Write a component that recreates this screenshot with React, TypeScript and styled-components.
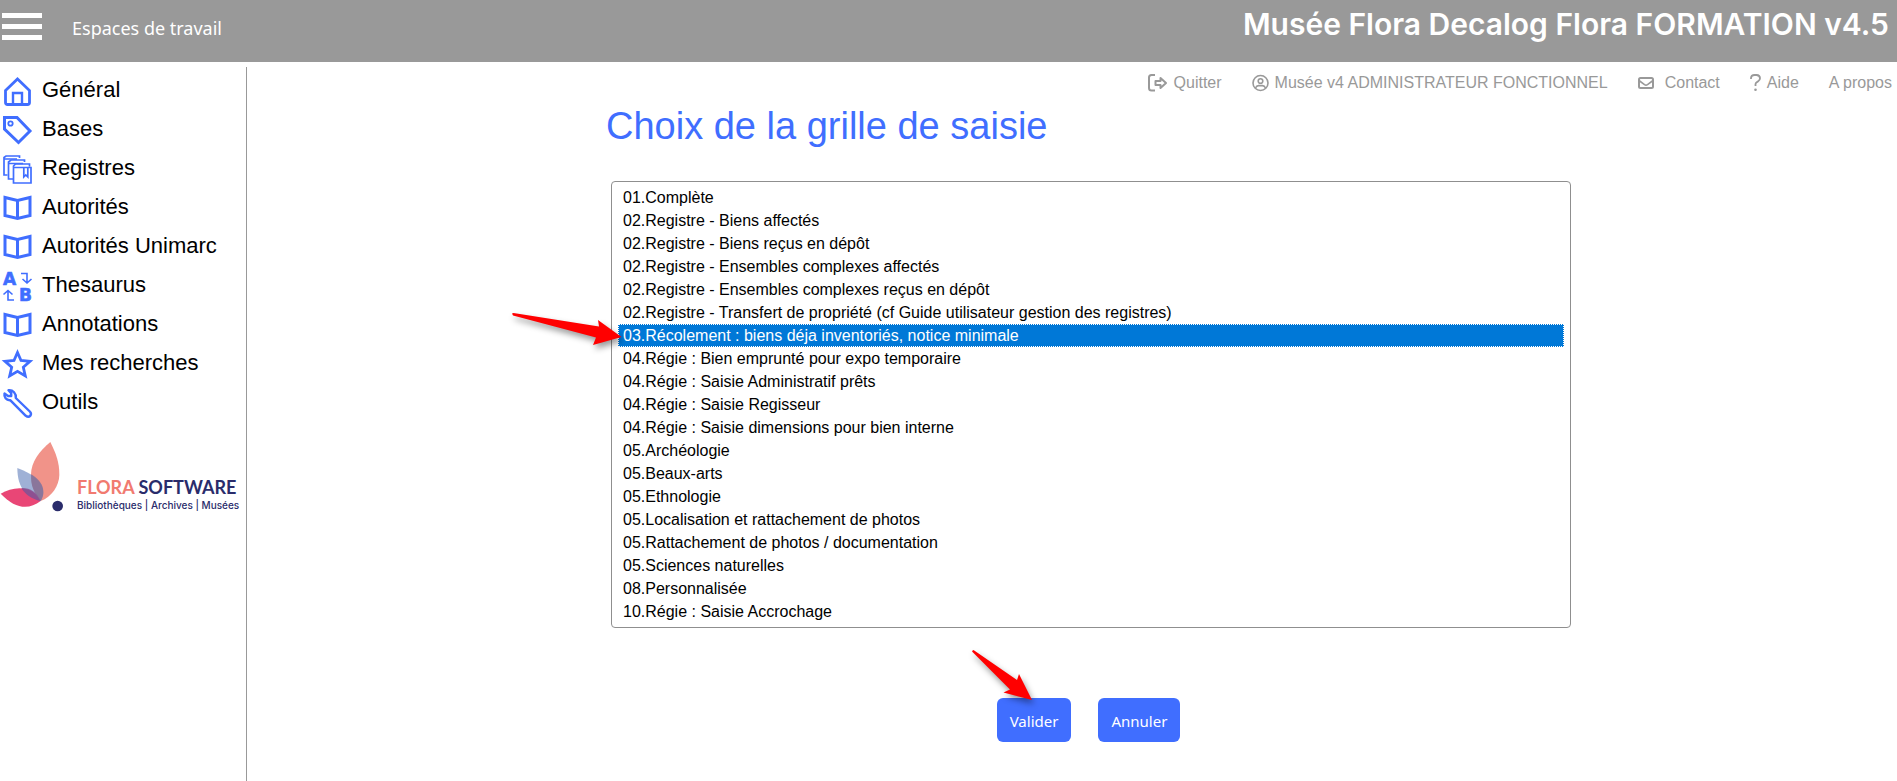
import React from "react";
import styled, { createGlobalStyle } from "styled-components";

const BLUE = "#406eff";
const GREY = "#999999";

const GlobalStyle = createGlobalStyle`
  * { box-sizing: border-box; }
  body {
    margin: 0;
    background: #fff;
    color: #000;
    font-family: "Liberation Sans", Arial, sans-serif;
  }
`;

const Page = styled.div`
  display: flex;
  flex-direction: column;
  min-height: 100vh;
`;

const TopBar = styled.header`
  display: flex;
  align-items: flex-start;
  justify-content: space-between;
  height: 62px;
  padding: 0 8px 0 2px;
  background: ${GREY};
  color: #fff;
`;

const TopLeft = styled.div`
  display: flex;
  align-items: center;
  gap: 30px;
  height: 56px;
`;

const MenuButton = styled.button`
  display: flex;
  flex-direction: column;
  gap: 6px;
  width: 40px;
  margin-bottom: 4px;
  padding: 0;
  border: 0;
  background: none;
  cursor: pointer;
`;

const MenuBar = styled.span`
  height: 5px;
  background: #fff;
`;

const WorkspaceLink = styled.a`
  color: #fff;
  font-family: "Noto Sans", "Segoe UI", sans-serif;
  font-size: 18px;
  line-height: 24px;
  text-decoration: none;
`;

const SiteTitle = styled.div`
  font-family: Inter, sans-serif;
  font-weight: 600;
  font-size: 30px;
  line-height: 48px;
  white-space: nowrap;
`;

const Body = styled.div`
  display: flex;
  flex: 1;
`;

const Sidebar = styled.aside`
  flex: 0 0 247px;
  margin-top: 5px;
  padding-top: 5px;
  border-right: 1px solid ${GREY};
`;

const NavList = styled.ul`
  margin: 0;
  padding: 0;
  list-style: none;
`;

const NavLink = styled.a`
  display: flex;
  align-items: center;
  gap: 10px;
  height: 39px;
  padding-left: 3px;
  color: #000;
  font-size: 22px;
  line-height: 36px;
  text-decoration: none;
`;

const NavIcon = styled.svg`
  flex: none;
  width: 29px;
  height: 29px;
  overflow: visible;
  fill: none;
  stroke: ${BLUE};
  stroke-width: 3;
`;

const NavLabel = styled.span`
  margin-bottom: 4px;
`;

const Brand = styled.div`
  display: flex;
  align-items: flex-end;
  gap: 13px;
  margin-top: 19px;
`;

const BrandMark = styled.svg`
  flex: none;
  width: 64px;
  height: 70px;
`;

const BrandText = styled.div`
  color: #2a2c6b;
  white-space: nowrap;
`;

const BrandName = styled.div`
  font-family: Lato, sans-serif;
  font-size: 18px;
  font-weight: 700;
  line-height: 22px;
`;

const BrandAccent = styled.span`
  color: #f17a70;
`;

const BrandTagline = styled.div`
  font-family: Inter, sans-serif;
  font-size: 10px;
  font-weight: 500;
  line-height: 14px;
`;

const Main = styled.main`
  flex: 1;
  min-width: 0;
`;

const UtilityNav = styled.nav`
  display: flex;
  justify-content: flex-end;
  align-items: center;
  gap: 30px;
  height: 42px;
  padding-right: 5px;
`;

const UtilityLink = styled.a<{ $gap?: number }>`
  display: flex;
  align-items: center;
  gap: ${({ $gap = 6 }) => $gap}px;
  color: ${GREY};
  font-size: 16px;
  line-height: 20px;
  text-decoration: none;
  white-space: nowrap;
`;

const UtilityIcon = styled.svg`
  flex: none;
  height: 18px;
  fill: none;
  stroke: ${GREY};
  stroke-width: 2;
`;

const Content = styled.div`
  display: grid;
  grid-template-columns: 359fr 965fr 326fr;
`;

const ChoiceForm = styled.form`
  grid-column: 2;
  min-width: 0;
`;

const Heading = styled.h1`
  margin: 0 0 33px;
  color: ${BLUE};
  font-size: 38px;
  font-weight: 400;
  line-height: 44px;
`;

const ListWrap = styled.div`
  position: relative;
  margin-left: 5px;
`;

const GridSelect = styled.select`
  display: block;
  width: 100%;
  height: auto;
  padding: 4px 6px;
  overflow: hidden;
  border: 1px solid #8f8f8f;
  border-radius: 4px;
  outline: 0;
  background: #fff;
  color: #000;
  font-family: inherit;
  font-size: 16px;
`;

const GridOption = styled.option`
  height: 23px;
  min-height: 23px;
  padding: 2px 4px 0;
  border: 1px solid transparent;

  &:checked {
    border: 1px dotted #fff;
    background: #0078d7 linear-gradient(#0078d7, #0078d7);
    color: #fff;
    -webkit-text-fill-color: #fff;
  }
`;

const Actions = styled.div`
  display: flex;
  justify-content: center;
  gap: 27px;
  margin-top: 70px;
`;

const ActionItem = styled.div`
  position: relative;
`;

const ActionButton = styled.button`
  height: 44px;
  padding: 1px 13px 0;
  border: 0;
  border-radius: 6px;
  background: ${BLUE};
  color: #fff;
  font-family: "Noto Sans", "Segoe UI", sans-serif;
  font-size: 15px;
  cursor: pointer;
`;

const Pointer = styled.svg<{ $left: number; $top: number }>`
  position: absolute;
  left: ${({ $left }) => $left}px;
  top: ${({ $top }) => $top}px;
  overflow: visible;
  fill: #ff0000;
  pointer-events: none;
  filter: drop-shadow(2px 4px 3px rgba(0, 0, 0, 0.4));
`;

const Book = () => (
  <path d="M14.5 6.5 L2 3.5 V21.5 L14.5 24.5 L27 21.5 V3.5 Z M14.5 6.5 V24.5" />
);

const icons: Record<string, React.ReactNode> = {
  home: (
    <>
      <path d="M2.5 13.5 L14.5 2 L26.5 13.5 V25.5 Q26.5 27.5 24.5 27.5 H4.5 Q2.5 27.5 2.5 25.5 Z" strokeWidth="2.8" />
      <path d="M10 27.5 V16 H19 V27.5" strokeWidth="2.4" />
    </>
  ),
  tag: (
    <>
      <path d="M1.5 1.5 H14 L27 15 L15.5 26.5 L1.5 13 Z" strokeWidth="3" />
      <circle cx="7.5" cy="7.5" r="2.2" strokeWidth="1.8" />
    </>
  ),
  registers: (
    <g strokeWidth="1.7">
      <path d="M16.5 3 V1 H3 L1 2.5 V20 H4.5 M1 4 H14" />
      <path d="M21.5 7 V5 H8 L5.5 7 V24 H10 M6 8.5 H20" />
      <path d="M26.5 11.5 V9 H12.5 L10.5 11 V28 H28 V12.5 H10.5" />
      <path d="M20.8 12.5 V22 L22.8 20 L24.8 22 V12.5" />
    </g>
  ),
  book: <Book />,
  thesaurus: (
    <>
      <g fill={BLUE} strokeWidth="0.6" fontFamily="DejaVu Sans, sans-serif" fontWeight="700" fontSize="17">
        <text x="0" y="13">A</text>
        <text x="16" y="29">B</text>
      </g>
      <path d="M18 1.5 H24 V11 M19.5 7 L24 11 L28.5 7" strokeWidth="1.6" />
      <path d="M11 28 H5 V18.5 M0.5 22.5 L5 18.5 L9.5 22.5" strokeWidth="1.6" />
    </>
  ),
  star: (
    <path d="M14.5 2.5 L18 10.5 L27 11.3 L20.3 17.3 L22.3 26 L14.5 21.4 L6.7 26 L8.7 17.3 L2 11.3 L11 10.5 Z" strokeWidth="2.8" />
  ),
  wrench: (
    <path
      d="M5.5 1.3 L8.2 4.2 V7 H5 L1.5 4.6 C0.8 8 3.2 11.5 7.2 11.2 L22.8 26.8 Q25.5 28.8 27.4 26.6 Q28.8 24.5 26.8 22.5 L12.8 9 C13.3 4.5 10 0.8 5.5 1.3 Z"
      strokeWidth="2.4"
      strokeLinejoin="round"
    />
  ),
};

const navItems = [
  { icon: "home", label: "Général" },
  { icon: "tag", label: "Bases" },
  { icon: "registers", label: "Registres" },
  { icon: "book", label: "Autorités" },
  { icon: "book", label: "Autorités Unimarc" },
  { icon: "thesaurus", label: "Thesaurus" },
  { icon: "book", label: "Annotations" },
  { icon: "star", label: "Mes recherches" },
  { icon: "wrench", label: "Outils" },
];

const grids = [
  "01.Complète",
  "02.Registre - Biens affectés",
  "02.Registre - Biens reçus en dépôt",
  "02.Registre - Ensembles complexes affectés",
  "02.Registre - Ensembles complexes reçus en dépôt",
  "02.Registre - Transfert de propriété (cf Guide utilisateur gestion des registres)",
  "03.Récolement : biens déja inventoriés, notice minimale",
  "04.Régie : Bien emprunté pour expo temporaire",
  "04.Régie : Saisie Administratif prêts",
  "04.Régie : Saisie Regisseur",
  "04.Régie : Saisie dimensions pour bien interne",
  "05.Archéologie",
  "05.Beaux-arts",
  "05.Ethnologie",
  "05.Localisation et rattachement de photos",
  "05.Rattachement de photos / documentation",
  "05.Sciences naturelles",
  "08.Personnalisée",
  "10.Régie : Saisie Accrochage",
];

export default function App() {
  return (
    <Page>
      <GlobalStyle />
      <TopBar>
        <TopLeft>
          <MenuButton type="button" aria-label="Menu">
            <MenuBar />
            <MenuBar />
            <MenuBar />
          </MenuButton>
          <WorkspaceLink href="#espaces">Espaces de travail</WorkspaceLink>
        </TopLeft>
        <SiteTitle>Musée Flora Decalog Flora FORMATION v4.5</SiteTitle>
      </TopBar>
      <Body>
        <Sidebar>
          <NavList>
            {navItems.map(({ icon, label }) => (
              <li key={label}>
                <NavLink href="#menu">
                  <NavIcon viewBox="0 0 29 29" aria-hidden="true">{icons[icon]}</NavIcon>
                  <NavLabel>{label}</NavLabel>
                </NavLink>
              </li>
            ))}
          </NavList>
          <Brand>
            <BrandMark viewBox="0 0 192 210" aria-hidden="true">
              <path d="M2 155 C40 132 98 128 122 177 C85 205 45 200 2 155 Z" fill="#e94676" />
              <path d="M151 0 C168 35 178 60 178 98 C178 130 155 165 122 177 C100 150 93 130 93 98 C93 60 118 28 151 0 Z" fill="#f19389" />
              <path d="M52 78 C98 95 130 118 130 150 C130 160 127 170 122 177 C82 168 52 140 52 78 Z" fill="#5f7dbb" fillOpacity="0.6" />
              <path d="M64 138 C90 137 110 150 122 177 C96 171 76 158 64 138 Z" fill="#8a4a8c" fillOpacity="0.75" />
              <path d="M94 97 C118 112 130 130 130 150 C130 160 127 170 122 177 C104 155 90 130 94 97 Z" fill="#7d6a92" fillOpacity="0.55" />
              <circle cx="173" cy="192" r="16" fill="#2a2c6b" />
            </BrandMark>
            <BrandText>
              <BrandName>
                <BrandAccent>FLORA</BrandAccent> SOFTWARE
              </BrandName>
              <BrandTagline>Bibliothèques | Archives | Musées</BrandTagline>
            </BrandText>
          </Brand>
        </Sidebar>
        <Main>
          <UtilityNav>
            <UtilityLink href="#quitter">
              <UtilityIcon width="20" viewBox="0 0 20 18" aria-hidden="true">
                <path d="M7 1 H3.5 Q1 1 1 3.5 V14 Q1 16.5 3.5 16.5 H7" />
                <path d="M7.5 7 H12.5 V4 L18 9 L12.5 14 V11 H7.5 Z" strokeLinejoin="round" />
              </UtilityIcon>
              Quitter
            </UtilityLink>
            <UtilityLink href="#compte">
              <UtilityIcon width="17" viewBox="0 0 17 18" aria-hidden="true">
                <circle cx="8.5" cy="9" r="7.5" strokeWidth="1.6" />
                <circle cx="8.5" cy="7" r="2.3" strokeWidth="1.6" />
                <path d="M3.5 14 Q4.5 11.6 6.5 11.6 H10.5 Q12.5 11.6 13.5 14" strokeWidth="1.6" />
              </UtilityIcon>
              Musée v4 ADMINISTRATEUR FONCTIONNEL
            </UtilityLink>
            <UtilityLink href="#contact" $gap={11}>
              <UtilityIcon width="16" viewBox="0 0 16 18" aria-hidden="true">
                <rect x="1" y="4" width="14" height="10" rx="1.5" />
                <path d="M1 6.5 L6.5 10.6 Q8 11.6 9.5 10.6 L15 6.5" strokeWidth="1.6" />
              </UtilityIcon>
              Contact
            </UtilityLink>
            <UtilityLink href="#aide">
              <UtilityIcon width="11" viewBox="0 0 11 18" aria-hidden="true">
                <path d="M1 5 V4 Q1.2 1 4.5 1 H6.5 Q10 1.2 10 4.2 Q10 6.2 8 7.4 Q5.5 8.8 5.5 10 V12" strokeWidth="1.8" />
                <circle cx="5.5" cy="15.7" r="1.3" fill={GREY} stroke="none" />
              </UtilityIcon>
              Aide
            </UtilityLink>
            <UtilityLink href="#apropos">A propos</UtilityLink>
          </UtilityNav>
          <Content>
            <ChoiceForm onSubmit={(e) => e.preventDefault()}>
              <Heading id="grid-title">Choix de la grille de saisie</Heading>
              <ListWrap>
                <GridSelect size={19} defaultValue={grids[6]} aria-labelledby="grid-title">
                  {grids.map((name) => (
                    <GridOption key={name} value={name}>{name}</GridOption>
                  ))}
                </GridSelect>
                <Pointer $left={-99} $top={132} width="110" height="32" aria-hidden="true">
                  <path d="M0 0.5 L1.5 0 L87 13.5 L86 7 L109.5 24 L81 32 L84 24.5 L1 2.5 Z" />
                </Pointer>
              </ListWrap>
              <Actions>
                <ActionItem>
                  <ActionButton type="submit">Valider</ActionButton>
                  <Pointer $left={-25} $top={-48} width="60" height="50" aria-hidden="true">
                    <path d="M0 1 L1.5 0 L45 30 L47 24 L60 50 L31.5 42.5 L38 39.5 L0.5 2 Z" />
                  </Pointer>
                </ActionItem>
                <ActionButton type="button">Annuler</ActionButton>
              </Actions>
            </ChoiceForm>
          </Content>
        </Main>
      </Body>
    </Page>
  );
}
